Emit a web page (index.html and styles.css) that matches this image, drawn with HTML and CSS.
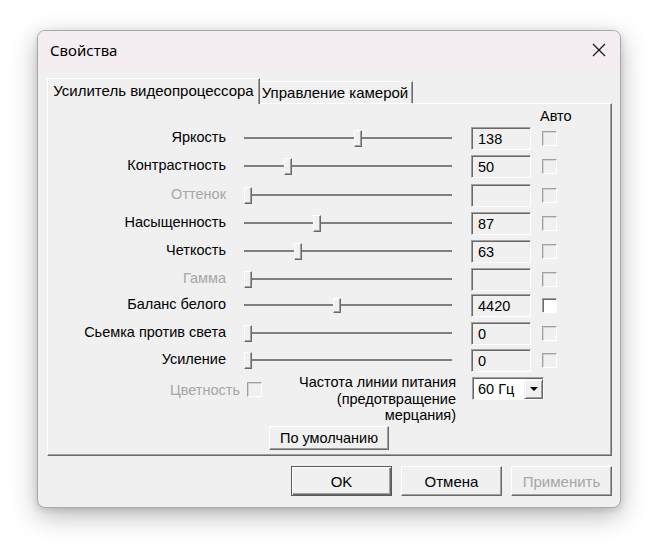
FILE: index.html
```html
<!DOCTYPE html>
<html lang="ru">
<head>
<meta charset="utf-8">
<title>Свойства</title>
<link rel="stylesheet" href="styles.css">
</head>
<body>
<div class="dialog">
  <div class="titlebar">
    <span class="title">Свойства</span>
    <svg class="close" width="14" height="14" viewBox="0 0 14 14"><path d="M1 1 L13 13 M13 1 L1 13" stroke="#1a1a1a" stroke-width="1.3" fill="none"/></svg>
  </div>
  <div class="client">
    <div class="tabs">
      <div class="tab tab-active">Усилитель видеопроцессора</div>
      <div class="tab tab-second">Управление камерой</div>
    </div>
    <div class="panel">
      <div class="auto-head">Авто</div>

      <div class="row first">
        <div class="label">Яркость</div>
        <div class="slider"><div class="track"></div><div class="thumb" style="left:110px"></div></div>
        <div class="edit">138</div>
        <div class="check"></div>
      </div>
      <div class="row">
        <div class="label">Контрастность</div>
        <div class="slider"><div class="track"></div><div class="thumb" style="left:40px"></div></div>
        <div class="edit">50</div>
        <div class="check"></div>
      </div>
      <div class="row gap6">
        <div class="label disabled">Оттенок</div>
        <div class="slider"><div class="track"></div><div class="thumb" style="left:0px"></div></div>
        <div class="edit"></div>
        <div class="check"></div>
      </div>
      <div class="row">
        <div class="label">Насыщенность</div>
        <div class="slider"><div class="track"></div><div class="thumb" style="left:69px"></div></div>
        <div class="edit">87</div>
        <div class="check"></div>
      </div>
      <div class="row">
        <div class="label">Четкость</div>
        <div class="slider"><div class="track"></div><div class="thumb" style="left:50px"></div></div>
        <div class="edit">63</div>
        <div class="check"></div>
      </div>
      <div class="row">
        <div class="label disabled">Гамма</div>
        <div class="slider"><div class="track"></div><div class="thumb" style="left:0px"></div></div>
        <div class="edit"></div>
        <div class="check"></div>
      </div>
      <div class="row gap3">
        <div class="label">Баланс белого</div>
        <div class="slider"><div class="track"></div><div class="thumb thumb-small" style="left:89px"></div></div>
        <div class="edit">4420</div>
        <div class="check check-on"></div>
      </div>
      <div class="row">
        <div class="label">Сьемка против света</div>
        <div class="slider"><div class="track"></div><div class="thumb" style="left:0px"></div></div>
        <div class="edit">0</div>
        <div class="check"></div>
      </div>
      <div class="row gap4">
        <div class="label">Усиление</div>
        <div class="slider"><div class="track"></div><div class="thumb" style="left:0px"></div></div>
        <div class="edit">0</div>
        <div class="check"></div>
      </div>

      <div class="extra">
        <div class="color-label disabled">Цветность</div>
        <div class="check color-check"></div>
        <div class="freq-label">Частота линии питания<br>(предотвращение<br>мерцания)</div>
        <div class="combo"><span class="combo-text">60 Гц</span><span class="combo-btn"><span class="arrow"></span></span></div>
      </div>
      <div class="defaults"><div class="btn btn-defaults">По умолчанию</div></div>
    </div>
    <div class="buttons">
      <div class="btn btn-main btn-default">OK</div>
      <div class="btn btn-main">Отмена</div>
      <div class="btn btn-main disabled">Применить</div>
    </div>
  </div>
</div>
</body>
</html>
```
FILE: styles.css
```css
html, body {
  margin: 0;
  padding: 0;
  background: #ffffff;
}
body {
  font-family: "Liberation Sans", Arial, sans-serif;
  font-size: 14.5px;
  color: #000;
  padding-top: 30px;
  padding-left: 37px;
  height: 545px;
  box-sizing: border-box;
  overflow: hidden;
}
.dialog {
  width: 584px;
  height: 478px;
  box-sizing: border-box;
  border: 1px solid #a9a9a9;
  border-radius: 8px;
  background: #f0f0f0;
  box-shadow: 0 8px 26px rgba(0,0,0,0.28), 0 2px 6px rgba(0,0,0,0.12);
  overflow: hidden;
  display: flex;
  flex-direction: column;
}
.titlebar {
  height: 39px;
  background: #f4eef3;
  display: flex;
  align-items: center;
  justify-content: space-between;
  padding: 0 14px 0 12px;
}
.title {
  font-family: "Noto Sans", "Liberation Sans", sans-serif;
  font-size: 15px;
  color: #000;
  margin-top: -2px;
}
.close {
  display: block;
  margin-top: -2px;
}
.client {
  padding: 8px 8px 0 9px;
  flex: 1;
}
.tabs {
  display: flex;
  align-items: flex-end;
  height: 25px;
  position: relative;
  z-index: 2;
}
.tab {
  box-sizing: border-box;
  background: #f0f0f0;
  border-top: 1px solid #ffffff;
  border-right: 1px solid #696969;
  box-shadow: inset -1px 0 0 #a0a0a0;
  display: flex;
  align-items: center;
  justify-content: center;
  white-space: nowrap;
  font-size: 15px;
}
.tab-active {
  width: 213px;
  height: 26px;
  border-left: 1px solid #ffffff;
  margin-bottom: -1px;
  padding-bottom: 2px;
}
.tab-second {
  width: 153px;
  height: 22px;
  padding-right: 2px;
}
.panel {
  box-sizing: border-box;
  width: 565px;
  height: 353px;
  border-top: 1px solid #ffffff;
  border-left: 1px solid #ffffff;
  border-right: 1px solid #696969;
  border-bottom: 1px solid #696969;
  box-shadow: inset -1px -1px 0 #a0a0a0;
  position: relative;
  z-index: 1;
}
.auto-head {
  margin-left: 492px;
  padding-top: 4px;
  line-height: 17px;
  height: 17px;
}
.row {
  display: flex;
  align-items: center;
  height: 23px;
  margin-top: 5px;
}
.row.first { margin-top: 2px; }
.row.gap6 { margin-top: 6px; }
.row.gap3 { margin-top: 3px; }
.row.gap4 { margin-top: 4px; }
.label {
  width: 178px;
  text-align: right;
  margin-right: 18px;
  white-space: nowrap;
  padding-bottom: 3px;
}
.disabled {
  color: #a6a6a6;
}
.slider {
  position: relative;
  width: 208px;
  height: 23px;
  margin-right: 19px;
}
.track {
  position: absolute;
  left: 0;
  right: 0;
  top: 10px;
  height: 2px;
  background: #808080;
}
.thumb {
  position: absolute;
  top: 3px;
  width: 8px;
  height: 17px;
  box-sizing: border-box;
  background: #f0f0f0;
  border-top: 1px solid #ffffff;
  border-left: 1px solid #ffffff;
  border-right: 1px solid #696969;
  border-bottom: 1px solid #696969;
  box-shadow: inset -1px -1px 0 #a0a0a0;
}
.thumb-small {
  top: 4px;
  height: 15px;
}
.edit {
  box-sizing: border-box;
  width: 60px;
  height: 23px;
  margin-right: 11px;
  border-top: 1px solid #a0a0a0;
  border-left: 1px solid #a0a0a0;
  border-right: 1px solid #ffffff;
  border-bottom: 1px solid #ffffff;
  box-shadow: inset 1px 1px 0 #696969;
  padding: 2px 0 0 6px;
  line-height: 18px;
}
.check {
  box-sizing: border-box;
  width: 15px;
  height: 15px;
  border-top: 1px solid #a0a0a0;
  border-left: 1px solid #a0a0a0;
  border-right: 1px solid #ffffff;
  border-bottom: 1px solid #ffffff;
  box-shadow: inset 1px 1px 0 #d4d4d4;
  background: #f0f0f0;
}
.check-on {
  background: #ffffff;
  box-shadow: inset 1px 1px 0 #696969;
}
.extra {
  display: flex;
  align-items: flex-start;
  margin-top: 2px;
}
.color-label {
  width: 192px;
  text-align: right;
  margin-top: 8px;
  line-height: 17px;
  margin-right: 7px;
}
.color-check {
  margin-top: 8px;
}
.freq-label {
  width: 194px;
  text-align: right;
  line-height: 16.5px;
  margin-right: 16px;
  white-space: nowrap;
}
.combo {
  box-sizing: border-box;
  width: 72px;
  height: 23px;
  margin-top: 3px;
  border-top: 1px solid #a0a0a0;
  border-left: 1px solid #a0a0a0;
  border-right: 1px solid #ffffff;
  border-bottom: 1px solid #ffffff;
  box-shadow: inset 1px 1px 0 #696969;
  background: #ffffff;
  display: flex;
  padding: 1px 0 0 1px;
}
.combo-text {
  flex: 1;
  padding-left: 4px;
  line-height: 20px;
}
.combo-btn {
  box-sizing: border-box;
  width: 19px;
  height: 20px;
  background: #f0f0f0;
  border-top: 1px solid #f0f0f0;
  border-left: 1px solid #f0f0f0;
  border-right: 1px solid #696969;
  border-bottom: 1px solid #696969;
  box-shadow: inset 1px 1px 0 #ffffff, inset -1px -1px 0 #a0a0a0;
  display: flex;
  align-items: center;
  justify-content: center;
}
.arrow {
  width: 0;
  height: 0;
  border-left: 4px solid transparent;
  border-right: 4px solid transparent;
  border-top: 4px solid #000;
}
.defaults {
  margin-top: 2px;
  padding-left: 221px;
}
.btn {
  box-sizing: border-box;
  background: #f0f0f0;
  border-top: 1px solid #ffffff;
  border-left: 1px solid #ffffff;
  border-right: 1px solid #696969;
  border-bottom: 1px solid #696969;
  box-shadow: inset -1px -1px 0 #a0a0a0;
  display: flex;
  align-items: center;
  justify-content: center;
  white-space: nowrap;
}
.btn-defaults {
  width: 120px;
  height: 24px;
}
.buttons {
  display: flex;
  justify-content: flex-end;
  gap: 9px;
  margin-top: 10px;
}
.btn-main {
  width: 101px;
  height: 30px;
  font-family: "Liberation Sans", Arial, sans-serif;
  font-size: 15px;
}
.btn-default {
  border: 1px solid #5a5a5a;
  box-shadow: inset 1px 1px 0 #ffffff, inset -1px -1px 0 #696969, inset -2px -2px 0 #a0a0a0;
}
```
